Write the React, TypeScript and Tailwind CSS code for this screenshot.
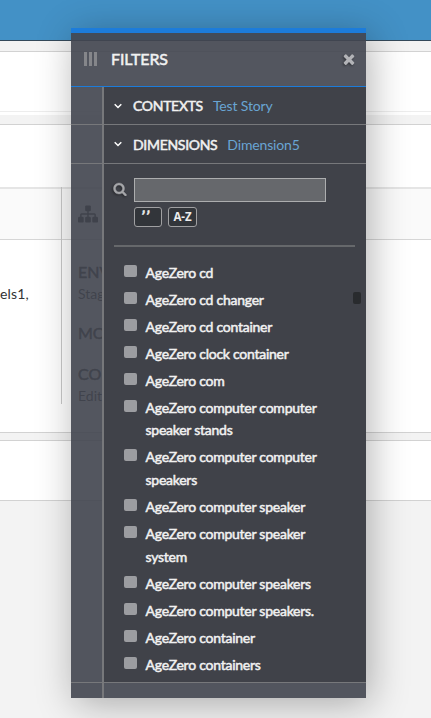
const items = [
  'AgeZero cd',
  'AgeZero cd changer',
  'AgeZero cd container',
  'AgeZero clock container',
  'AgeZero com',
  'AgeZero computer computer speaker stands',
  'AgeZero computer computer speakers',
  'AgeZero computer speaker',
  'AgeZero computer speaker system',
  'AgeZero computer speakers',
  'AgeZero computer speakers.',
  'AgeZero container',
  'AgeZero containers',
];

function Sitemap() {
  return (
    <svg viewBox="0 0 1792 1792" className="block size-5 fill-[#222]">
      <path d="M1792 1248v320q0 40-28 68t-68 28h-320q-40 0-68-28t-28-68v-320q0-40 28-68t68-28h96v-192h-512v192h96q40 0 68 28t28 68v320q0 40-28 68t-68 28h-320q-40 0-68-28t-28-68v-320q0-40 28-68t68-28h96v-192h-512v192h96q40 0 68 28t28 68v320q0 40-28 68t-68 28h-320q-40 0-68-28t-28-68v-320q0-40 28-68t68-28h96v-192q0-52 38-90t90-38h512v-192h-96q-40 0-68-28t-28-68v-320q0-40 28-68t68-28h320q40 0 68 28t28 68v320q0 40-28 68t-68 28h-96v192h512q52 0 90 38t38 90v192h96q40 0 68 28t28 68z" />
    </svg>
  );
}

function Search() {
  return (
    <svg viewBox="0 0 1792 1792" className="block size-[14px] fill-[#a5a6a9] stroke-[#a5a6a9] stroke-[50] drop-shadow-[-1px_1px_1px_rgba(0,0,0,0.4)]">
      <path d="M1216 832q0-185-131.500-316.500t-316.500-131.500-316.500 131.500-131.500 316.500 131.500 316.500 316.500 131.500 316.500-131.500 131.500-316.500zm512 832q0 52-38 90t-90 38q-54 0-90-38l-343-342q-179 124-399 124-143 0-273.500-55.500t-225-150-150-225-55.500-273.500 55.500-273.500 150-225 225-150 273.500-55.500 273.500 55.500 225 150 150 225 55.500 273.500q0 220-124 399l343 343q37 37 37 90z" />
    </svg>
  );
}

function Close() {
  return (
    <svg viewBox="0 0 1792 1792" className="block size-4 fill-[#b2b3b7] drop-shadow-[-1px_1px_1px_rgba(0,0,0,0.4)]">
      <path d="M1490 1322q0 40-28 68l-136 136q-28 28-68 28t-68-28l-294-294-294 294q-28 28-68 28t-68-28l-136-136q-28-28-28-68t28-68l294-294-294-294q-28-28-28-68t28-68l136-136q28-28 68-28t68 28l294 294 294-294q28-28 68-28t68 28l136 136q28 28 28 68t-28 68l-294 294 294 294q28 28 28 68z" />
    </svg>
  );
}

function Chevron() {
  return (
    <svg viewBox="0 0 8 6" className="block h-[6px] w-2 fill-none stroke-white stroke-[1.5]">
      <path d="M0.7 1.2 L4 4.5 L7.3 1.2" />
    </svg>
  );
}

function Section({ title, value, height }: { title: string; value: string; height: string }) {
  return (
    <div className={`flex items-center border-b border-[#77787b] pl-[10px] ${height}`}>
      <Chevron />
      <span className="ml-[11px] text-[14px] tracking-[-0.3px] text-[#f1f1f1] [-webkit-text-stroke:0.5px_#f1f1f1]">{title}</span>
      <span className="ml-[10px] text-[14px] tracking-[-0.15px] text-[#69a5d3]">{value}</span>
    </div>
  );
}

function Page() {
  return (
    <div className="flex h-[718px] flex-col bg-[#f3f3f3] text-[#333]">
      <div className="h-[41px] shrink-0 border-b border-[#34495a] bg-[#4391c6]" />
      <div className="mt-[10px] h-[61px] shrink-0 border-y border-t-[#d2d2d2] border-b-[#ededed] bg-white" />
      <div className="h-[3px] shrink-0 bg-white" />
      <div className="mt-[9px] flex h-[309px] shrink-0 flex-col border-y border-[#d2d2d2] bg-white">
        <div className="h-[62px] shrink-0" />
        <div className="flex h-[217px]">
          <div className="w-[62px] border-r border-[#c9c9c9]">
            <div className="h-[53px] border-b border-t-2 border-b-[#d6d6d6] border-t-[#e5e5e5] bg-[#fafafa]" />
            <div className="pt-[44px] text-[14px] leading-5 tracking-[0.15px]">els1,</div>
          </div>
          <div className="flex-1">
            <div className="h-[53px] border-b border-t-2 border-b-[#d6d6d6] border-t-[#e5e5e5] bg-[#fafafa] pl-4 pt-[15px]">
              <Sitemap />
            </div>
            <div className="pl-4 pt-[21px] text-[14px] leading-[22px]">
              <div className="text-[16px] [-webkit-text-stroke:0.5px_#222]">ENV</div>
              <div>Stag</div>
              <div className="mt-[17px] text-[16px] [-webkit-text-stroke:0.5px_#222]">MO</div>
              <div className="mt-[19px] text-[16px] [-webkit-text-stroke:0.5px_#222]">CO</div>
              <div>Edit</div>
            </div>
          </div>
        </div>
      </div>
      <div className="mt-[7px] h-[61px] shrink-0 border-y border-[#d2d2d2] bg-white" />
    </div>
  );
}

export default function App() {
  return (
    <div className="relative h-[718px] w-[431px] overflow-hidden [font-family:Lato,sans-serif]">
      <Page />
      <div className="absolute left-[71px] top-[28px] flex h-[670px] w-[295px] flex-col border-t-[5px] border-[#1c7cdb] bg-[rgba(66,69,79,0.91)] shadow-[4px_6px_36px_rgba(0,0,0,0.3)]">
        <div className="flex h-[54px] shrink-0 items-center border-b border-[#1c7cdb] pb-px pl-[13px] pr-[9px]">
          <div className="flex gap-[2px]">
            <div className="h-[14px] w-[3px] bg-[#85868a]" />
            <div className="h-[14px] w-[3px] bg-[#85868a]" />
            <div className="h-[14px] w-[3px] bg-[#85868a]" />
          </div>
          <span className="ml-[14px] flex-1 text-[16px] tracking-[-0.1px] text-[#f1f1f1] [-webkit-text-stroke:0.5px_#f1f1f1]">FILTERS</span>
          <Close />
        </div>
        <div className="flex flex-1">
          <div className="flex w-[33px] flex-col border-r-2 border-[#77787b]">
            <div className="h-[38px] border-b border-[#77787b]" />
            <div className="h-[39px] border-b border-[#77787b]" />
            <div className="h-[519px] border-b border-[#77787b]" />
          </div>
          <div className="flex flex-1 flex-col">
            <div className="flex h-[596px] flex-col border-b border-[#77787b] bg-[#404249]">
              <Section title="CONTEXTS" value="Test Story" height="h-[38px]" />
              <Section title="DIMENSIONS" value="Dimension5" height="h-[39px]" />
              <div className="flex px-[9px] pt-[14px]">
                <div className="pt-1"><Search /></div>
                <div className="ml-[7px]">
                  <div className="h-6 w-[192px] border border-[#acadae] bg-[#66686c]" />
                  <div className="mt-[5px] flex gap-[6px] text-[12px] font-bold leading-[18px] text-[#ececec]">
                    <div className="h-5 w-7 rounded-[3px] border border-[#a0a0a2] bg-[#32353a] pr-1 text-center text-[15px] italic leading-[17px] tracking-[1.5px] [-webkit-text-stroke:0.5px_#ececec]">’’</div>
                    <div className="h-5 w-[29px] rounded-[3px] border border-[#a0a0a2] bg-[#32353a] text-center text-[11.5px] tracking-[-0.1px] [font-family:'Open_Sans',sans-serif]">A-Z</div>
                  </div>
                </div>
              </div>
              <div className="ml-[10px] mt-[18px] h-[2px] w-[241px] shrink-0 bg-[#66686b]" />
              <div className="flex pt-[15px]">
                <div className="flex w-[239px] flex-col gap-1 pl-5">
                  {items.map((t) => (
                    <div key={t} className="flex items-start">
                      <div className="mt-[3px] h-3 w-[13px] shrink-0 rounded-[2px] bg-[#9c9da1]" />
                      <div className="ml-[8.5px] w-[178px] text-[14px] leading-[22.9px] tracking-[-0.25px] text-[#f1f1f1] [-webkit-text-stroke:0.5px_#f1f1f1]">{t}</div>
                    </div>
                  ))}
                </div>
                <div className="ml-[10px] mt-[30px] h-3 w-2 rounded-[2px] bg-[#292b2e]" />
              </div>
            </div>
          </div>
        </div>
      </div>
    </div>
  );
}
